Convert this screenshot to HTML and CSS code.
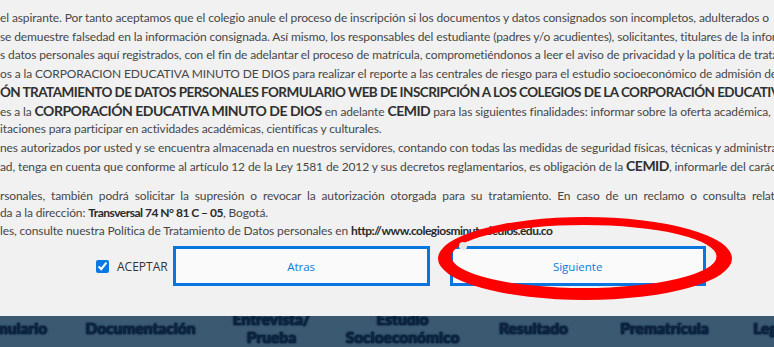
FILE: index.html
```html
<!DOCTYPE html>
<html lang="es">
<head>
    <meta charset="UTF-8">
    <meta name="viewport" content="width=device-width, initial-scale=1.0">
    <title>Autorización de tratamiento de datos</title>
    <link rel="stylesheet" href="styles.css">
</head>
<body>

<div class="modal">
    <!-- Terms text (scrolled, wider than the window) -->
    <div class="terms">
        <div class="line">el aspirante. Por tanto aceptamos que el colegio anule el proceso de inscripción si los documentos y datos consignados son incompletos, adulterados o</div>
        <div class="line">se demuestre falsedad en la información consignada. Así mismo, los responsables del estudiante (padres y/o acudientes), solicitantes, titulares de la información</div>
        <div class="line">s datos personales aquí registrados, con el fin de adelantar el proceso de matrícula, comprometiéndonos a leer el aviso de privacidad y la política de tratamiento</div>
        <div class="line">os a la CORPORACION EDUCATIVA MINUTO DE DIOS para realizar el reporte a las centrales de riesgo para el estudio socioeconómico de admisión del alumno</div>
        <div class="line heading">ÓN TRATAMIENTO DE DATOS PERSONALES FORMULARIO WEB DE INSCRIPCIÓN A LOS COLEGIOS DE LA CORPORACIÓN EDUCATIVA MINUTO DE DIOS</div>
        <div class="line">es a la <b class="brand">CORPORACIÓN EDUCATIVA MINUTO DE DIOS</b> en adelante <b class="brand">CEMID</b> para las siguientes finalidades: informar sobre la oferta académica, Realizar</div>
        <div class="line">itaciones para participar en actividades académicas, científicas y culturales.</div>
        <div class="line">nes autorizados por usted y se encuentra almacenada en nuestros servidores, contando con todas las medidas de seguridad físicas, técnicas y administrativas</div>
        <div class="line">ad, tenga en cuenta que conforme al artículo 12 de la Ley 1581 de 2012 y sus decretos reglamentarios, es obligación de la <b class="brand">CEMID</b>, informarle del carácter facultativo</div>

        <div class="block">
            <div class="line spread">rsonales, también podrá solicitar la supresión o revocar la autorización otorgada para su tratamiento. En caso de un reclamo o consulta relativa a</div>
            <div class="line">da a la dirección: <b class="addr">Transversal 74 N° 81 C – 05</b>, Bogotá.</div>
            <div class="line">les, consulte nuestra Política de Tratamiento de Datos personales en <b class="addr">http://www.colegiosminutodedios.edu.co</b></div>
        </div>
    </div>

    <!-- Accept + navigation buttons -->
    <div class="actions">
        <label class="accept"><input type="checkbox" checked> ACEPTAR</label>
        <button class="btn">Atras</button>
        <button class="btn">Siguiente</button>
    </div>

    <!-- hand drawn red mark over the next button -->
    <svg class="mark" width="320" height="100" viewBox="0 0 320 100">
        <path fill="#ff0000" fill-rule="evenodd" d="M8 48.5a147 41.5 0 1 0 294 0a147 41.5 0 1 0 -294 0Z M21.5 46.5a132.5 31.5 0 1 0 265 0a132.5 31.5 0 1 0 -265 0Z"/>
        <circle cx="33" cy="36" r="4" fill="#e6e6e6"/>
    </svg>
</div>

<!-- steps bar behind the modal -->
<nav class="steps">
    <div class="step">Formulario</div>
    <div class="step">Documentación</div>
    <div class="step">Entrevista/<br>Prueba</div>
    <div class="step">Estudio<br>Socioeconómico</div>
    <div class="step">Resultado</div>
    <div class="step">Prematrícula</div>
    <div class="step">Legalización</div>
</nav>

</body>
</html>
```

FILE: styles.css
```css
html, body {
    margin: 0;
    padding: 0;
    overflow: hidden;
}
body {
    background-color: #3b5a72;
    font-family: Lato, "Open Sans", sans-serif;
}
.modal {
    position: relative;
    height: 316px;
    background-color: #f1f1f1;
    box-sizing: border-box;
    padding-top: 9px;
}
.terms {
    color: #474747;
    font-size: 12px;
    letter-spacing: -0.12px;
}
.line {
    white-space: nowrap;
    line-height: 18.5px;
    height: 18.5px;
}
.heading {
    font-weight: 700;
    font-size: 13.5px;
    letter-spacing: -0.55px;
    color: #2f2f2f;
}
.brand {
    font-weight: 700;
    font-size: 14px;
    letter-spacing: -0.5px;
    color: #2f2f2f;
}
.addr {
    font-weight: 700;
    letter-spacing: -0.5px;
    color: #2a2a2a;
}
.block {
    margin-top: 11px;
}
.block .line {
    line-height: 17.5px;
    height: 17.5px;
}
.spread {
    word-spacing: 3px;
}
.actions {
    display: flex;
    align-items: center;
    padding-left: 96px;
    margin-top: 7px;
    font-family: "Open Sans", sans-serif;
}
.accept {
    display: flex;
    align-items: center;
    gap: 8px;
    font-size: 12px;
    color: #333;
}
.accept input {
    margin: 0;
    width: 13px;
    height: 13px;
    accent-color: #0b78e3;
}
.btn {
    height: 40px;
    width: 257px;
    margin-left: 5px;
    background-color: #fafafa;
    border: 3px solid #0a74e0;
    color: #0a7bd8;
    font-family: "Open Sans", sans-serif;
    font-size: 11.5px;
}
.btn + .btn {
    margin-left: 20px;
    width: 256px;
}
.mark {
    position: absolute;
    left: 430px;
    top: 210px;
}
.steps {
    display: flex;
    align-items: center;
    height: 24px;
    padding-bottom: 16px;
    margin-left: -56px;
    overflow: hidden;
}
.step {
    flex: 0 0 131px;
    text-align: center;
    font-weight: 900;
    font-size: 15.5px;
    line-height: 18px;
    color: #0d2440;
    text-shadow: 0 0 2px #0d2440, 0 0 2px #0d2440, 0 0 1px #0d2440;
}
```
